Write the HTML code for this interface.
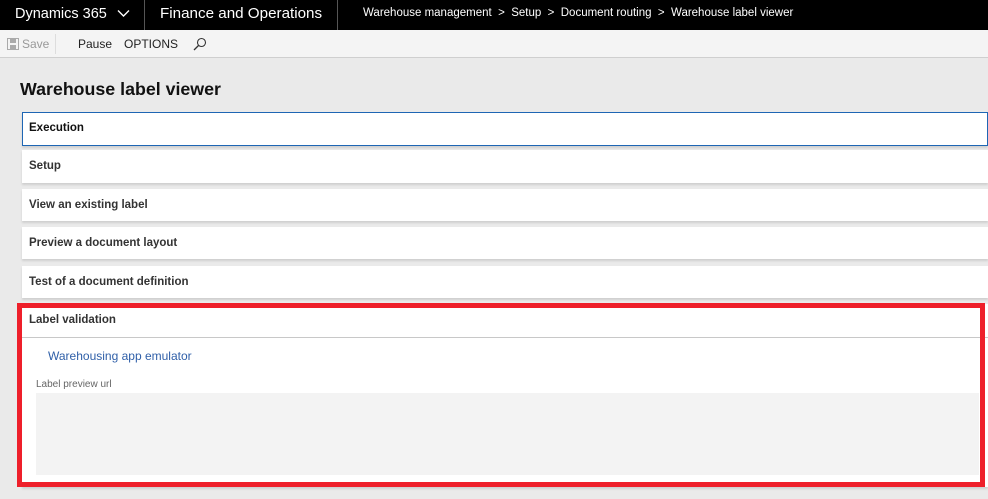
<!DOCTYPE html>
<html><head><style>
*{margin:0;padding:0;box-sizing:border-box}
body{width:988px;height:499px;overflow:hidden;background:#eaeaea;font-family:"Segoe UI","Liberation Sans",sans-serif;position:relative;color:#222}
.top{position:absolute;left:0;top:0;width:988px;height:30px;background:#000;color:#fff}
.top span{position:absolute;white-space:nowrap}
.sep{position:absolute;top:0;width:1px;height:30px;background:#555}
.tb{position:absolute;left:0;top:30px;width:988px;height:28px;background:#f4f4f4;border-bottom:1px solid #cfcfcf;font-size:12px}
.tb span{position:absolute;top:7px}
h1{position:absolute;left:20px;top:79px;font-size:17.8px;font-weight:bold;color:#111}
.sec{position:absolute;left:22px;width:966px;background:#fff;font-size:11.5px;font-weight:bold;color:#333;padding-left:7px;box-shadow:0 2px 2px #cfcfcf}
</style></head><body>
<div class="top">
<span style="left:15px;top:6px;font-size:14.5px">Dynamics 365</span>
<svg style="position:absolute;left:117px;top:9px" width="13" height="9"><path d="M1 1.5 L6.5 7 L12 1.5" stroke="#fff" stroke-width="1.4" fill="none"/></svg>
<div class="sep" style="left:144px"></div>
<span style="left:160px;top:5px;font-size:15.2px">Finance and Operations</span>
<div class="sep" style="left:337px"></div>
<span style="left:363px;top:7px;font-size:11.5px">Warehouse management &nbsp;&gt;&nbsp; Setup &nbsp;&gt;&nbsp; Document routing &nbsp;&gt;&nbsp; Warehouse label viewer</span>
</div>
<div class="tb">
<svg style="position:absolute;left:7px;top:8px" width="12" height="12"><rect x="0.5" y="0.5" width="11" height="11" fill="none" stroke="#aaa"/><rect x="3" y="1" width="6" height="4" fill="#aaa"/><rect x="3" y="7" width="6" height="4" fill="#aaa"/></svg>
<span style="left:22px;color:#999">Save</span>
<div style="position:absolute;left:55px;top:4px;width:1px;height:20px;background:#ddd"></div>
<span style="left:78px">Pause</span>
<span style="left:124px">OPTIONS</span>
<svg style="position:absolute;left:193px;top:7px" width="14" height="14"><circle cx="8.5" cy="5.5" r="4" fill="none" stroke="#333" stroke-width="1.1"/><path d="M5.5 8.5 L1 13" stroke="#333" stroke-width="1.3"/></svg>
</div>
<h1>Warehouse label viewer</h1>
<div class="sec" style="top:112px;height:34px;line-height:31px;border:1px solid #1e66b4;padding-left:6px;color:#111">Execution</div>
<div class="sec" style="top:150px;height:33px;line-height:32px">Setup</div>
<div class="sec" style="top:189px;height:32px;line-height:32px">View an existing label</div>
<div class="sec" style="top:227px;height:32px;line-height:32px">Preview a document layout</div>
<div class="sec" style="top:266px;height:32px;line-height:32px">Test of a document definition</div>
<div class="sec" style="top:304px;height:183px;padding:0">
<div style="height:34px;line-height:32px;padding-left:7px;border-bottom:1px solid #c8c8c8">Label validation</div>
<div style="position:absolute;left:26px;top:45px;font-weight:normal;color:#2f5fa8;font-size:12px">Warehousing app emulator</div>
<div style="position:absolute;left:14px;top:75px;font-weight:normal;color:#666;font-size:10px">Label preview url</div>
<div style="position:absolute;left:14px;top:89px;width:943px;height:82px;background:#f3f3f3"></div>
</div>
<div style="position:absolute;left:17px;top:303px;width:968px;height:184px;border:5px solid #ee1f2a"></div>
</body></html>
